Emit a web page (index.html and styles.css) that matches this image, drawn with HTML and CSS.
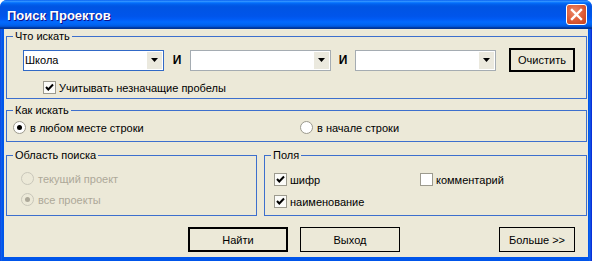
FILE: index.html
```html
<!DOCTYPE html>
<html lang="ru">
<head>
    <meta charset="UTF-8">
    <title>Поиск Проектов</title>
    <link rel="stylesheet" href="styles.css">
</head>
<body>
    <div class="window">
        <div class="titlebar">
            <span class="title">Поиск Проектов</span>
            <span class="close">
                <svg width="19" height="19" viewBox="0 0 19 19"><path d="M5 5 L14 14 M14 5 L5 14" stroke="#fff" stroke-width="2.4" stroke-linecap="square"/></svg>
            </span>
        </div>

        <div class="client">
            <!-- что искать -->
            <fieldset class="group group-what">
                <legend>Что искать</legend>
                <div class="search-row">
                    <div class="combo focused">
                        <span class="combo-text">Школа</span>
                        <span class="combo-arrow"><svg width="7" height="4" viewBox="0 0 7 4"><path d="M0 0 H7 L3.5 4 Z" fill="#000"/></svg></span>
                    </div>
                    <span class="and">И</span>
                    <div class="combo combo-wide">
                        <span class="combo-text"></span>
                        <span class="combo-arrow"><svg width="7" height="4" viewBox="0 0 7 4"><path d="M0 0 H7 L3.5 4 Z" fill="#000"/></svg></span>
                    </div>
                    <span class="and and-narrow">И</span>
                    <div class="combo">
                        <span class="combo-text"></span>
                        <span class="combo-arrow"><svg width="7" height="4" viewBox="0 0 7 4"><path d="M0 0 H7 L3.5 4 Z" fill="#000"/></svg></span>
                    </div>
                    <button class="btn btn-strong btn-clear">Очистить</button>
                </div>
                <div class="option spaces">
                    <span class="checkbox"><svg width="11" height="11" viewBox="0 0 11 11"><path d="M2 5 L4.3 7.5 L9 2.5" fill="none" stroke="#000" stroke-width="2"/></svg></span>
                    Учитывать незначащие пробелы
                </div>
            </fieldset>

            <!-- как искать -->
            <fieldset class="group group-how">
                <legend>Как искать</legend>
                <div class="how-row">
                    <div class="option"><span class="radio checked"></span>в любом месте строки</div>
                    <div class="option"><span class="radio"></span>в начале строки</div>
                </div>
            </fieldset>

            <div class="bottom-groups">
                <fieldset class="group group-area">
                    <legend>Область поиска</legend>
                    <div class="option disabled"><span class="radio"></span>текущий проект</div>
                    <div class="option disabled"><span class="radio checked"></span>все проекты</div>
                </fieldset>

                <fieldset class="group group-fields">
                    <legend>Поля</legend>
                    <div class="fields-grid">
                        <div class="option">
                            <span class="checkbox"><svg width="11" height="11" viewBox="0 0 11 11"><path d="M2 5 L4.3 7.5 L9 2.5" fill="none" stroke="#000" stroke-width="2"/></svg></span>шифр
                        </div>
                        <div class="option"><span class="checkbox empty"></span>комментарий</div>
                        <div class="option">
                            <span class="checkbox"><svg width="11" height="11" viewBox="0 0 11 11"><path d="M2 5 L4.3 7.5 L9 2.5" fill="none" stroke="#000" stroke-width="2"/></svg></span>наименование
                        </div>
                    </div>
                </fieldset>
            </div>

            <div class="buttons">
                <button class="btn btn-strong btn-find">Найти</button>
                <button class="btn btn-exit">Выход</button>
                <button class="btn btn-more">Больше &gt;&gt;</button>
            </div>
        </div>
    </div>
</body>
</html>
```

FILE: styles.css
```css
body {
    margin: 0;
    background: #fff;
    font-family: "Liberation Sans", Arial, sans-serif;
    font-size: 11px;
    color: #000;
}

.window {
    width: 592px;
    height: 261px;
    display: flex;
    flex-direction: column;
    border-radius: 7px 7px 0 0;
    overflow: hidden;
    background: linear-gradient(to right, #0831d9 0, #166aee 1px, #0055ea 2px, #0055ea 589px, #166aee 590px, #0831d9 591px);
}

/* title bar */
.titlebar {
    height: 29px;
    flex: none;
    display: flex;
    align-items: center;
    padding: 0 5px 0 7px;
    background: linear-gradient(to bottom, #0058ee 0%, #3593ff 4%, #288eff 6%, #127dff 8%, #036ffc 10%, #0262ee 14%, #0057e5 20%, #0054e3 24%, #0055eb 56%, #005bf5 66%, #026afe 76%, #0062ef 86%, #0052d6 92%, #0040ab 94%, #003092 100%);
}

.title {
    flex: 1;
    color: #fff;
    font-weight: bold;
    font-size: 13px;
    text-shadow: 1px 1px 0 #0f1089;
    margin-top: 1px;
}

.close {
    width: 19px;
    height: 19px;
    border: 1px solid #fff;
    border-radius: 3px;
    background: radial-gradient(circle at 40% 35%, #ec8a6c 0, #dd5a35 55%, #c4401a 100%);
    display: flex;
}

/* client area */
.client {
    flex: 1;
    margin: 0 4px 4px;
    padding: 0 1px 0 2px;
    background: #ece9d8;
    display: flex;
    flex-direction: column;
}

.group {
    margin: 0;
    padding: 0;
    border: 1px solid #3d6fcd;
    min-width: 0;
}

.group legend {
    padding: 0 2px;
    margin-left: 6px;
    line-height: 14px;
}

.group-what {
    height: 70px;
    box-sizing: border-box;
}

.search-row {
    display: flex;
    align-items: center;
    height: 24px;
    margin-top: 5px;
    padding-left: 16px;
}

.combo {
    flex: none;
    width: 141px;
    height: 21px;
    box-sizing: border-box;
    border: 1px solid #a5acb2;
    background: #fff;
    display: flex;
    align-items: center;
}

.combo.combo-wide {
    width: 141px;
}

.combo.focused {
    border-color: #3169c6;
}

.combo-text {
    flex: 1;
    padding-left: 1px;
}

.combo-arrow {
    width: 15px;
    height: 17px;
    margin: 1px;
    background: #ebe9de;
    display: flex;
    align-items: center;
    justify-content: center;
}

.and {
    flex: none;
    width: 26px;
    text-align: center;
    font-weight: bold;
    font-size: 12px;
}

.and.and-narrow {
    width: 24px;
}

.btn {
    font-family: inherit;
    font-size: 11px;
    color: #000;
    background: #ece9d8;
    border: 1px solid #000;
    padding: 0;
    height: 25px;
}

.btn-strong {
    border-width: 2px;
}

.btn-clear {
    flex: none;
    width: 66px;
    height: 24px;
    margin-left: 13px;
}

.option {
    display: flex;
    align-items: center;
    height: 13px;
}

.option.spaces {
    margin-top: 9px;
    padding-left: 36px;
}

.checkbox {
    width: 13px;
    height: 13px;
    box-sizing: border-box;
    border: 1px solid #9c9a8e;
    background: #fbfbf8;
    margin-right: 3px;
    display: flex;
}

.checkbox.empty {
    background: #fff;
}

.radio {
    width: 13px;
    height: 13px;
    box-sizing: border-box;
    border: 1px solid #9c9a8e;
    border-radius: 50%;
    background: #fff;
    margin-right: 4px;
    display: flex;
    align-items: center;
    justify-content: center;
}

.radio.checked::after {
    content: "";
    width: 5px;
    height: 5px;
    border-radius: 50%;
    background: #000;
}

.option.disabled {
    color: #aca899;
}

.option.disabled .radio {
    background: #ece9d8;
    border-color: #c9c7ba;
}

.option.disabled .radio.checked::after {
    background: #aca899;
}

/* как искать */
.group-how {
    margin-top: 4px;
    height: 39px;
    box-sizing: border-box;
}

.how-row {
    display: grid;
    grid-template-columns: 287px 1fr;
    margin-top: 4px;
    padding-left: 6px;
}

/* bottom groups */
.bottom-groups {
    display: flex;
    gap: 7px;
    margin-top: 6px;
}

.group-area {
    width: 251px;
    height: 68px;
    box-sizing: border-box;
}

.group-area .option {
    margin-top: 10px;
    padding-left: 14px;
}

.group-area .option + .option {
    margin-top: 8px;
}

.group-fields {
    flex: 1;
    height: 68px;
    box-sizing: border-box;
}

.fields-grid {
    display: grid;
    grid-template-columns: 146px 1fr;
    row-gap: 9px;
    margin-top: 11px;
    padding-left: 9px;
}

/* buttons */
.buttons {
    display: flex;
    gap: 12px;
    margin-top: 11px;
    padding: 0 12px 0 182px;
}

.btn-find,
.btn-exit {
    width: 100px;
}

.btn-more {
    width: 76px;
    margin-left: auto;
}
```
